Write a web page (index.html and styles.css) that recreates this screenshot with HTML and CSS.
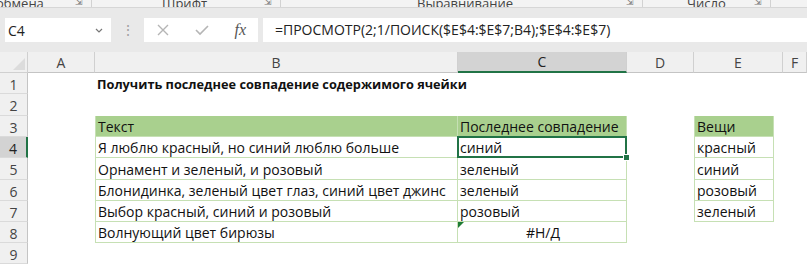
FILE: index.html
```html
<!DOCTYPE html>
<html lang="ru">
<head>
    <meta charset="UTF-8">
    <meta name="viewport" content="width=device-width, initial-scale=1.0">
    <title>Последнее совпадение</title>
    <link rel="stylesheet" href="styles.css">
</head>
<body>
    <div class="ribbon">
        <div class="group g-clip"><span>Буфер обмена</span><i class="launch">⇲</i></div>
        <div class="group g-font"><span>Шрифт</span><i class="launch">⇲</i></div>
        <div class="group g-align"><span>Выравнивание</span><i class="launch">⇲</i></div>
        <div class="group g-num"><span>Число</span><i class="launch">⇲</i></div>
    </div>

    <div class="formula-bar">
        <div class="name-box">
            <span>C4</span>
            <svg width="8" height="5" viewBox="0 0 8 5"><path d="M1 1 L4 4 L7 1" fill="none" stroke="#777" stroke-width="1.2"/></svg>
        </div>
        <div class="grip">⋮</div>
        <div class="fx-buttons">
            <svg width="14" height="14" viewBox="0 0 14 14"><path d="M2 2 L12 12 M12 2 L2 12" stroke="#b5b5b5" stroke-width="1.4"/></svg>
            <svg width="16" height="14" viewBox="0 0 16 14"><path d="M2 7 L6 11 L14 3" fill="none" stroke="#b5b5b5" stroke-width="1.6"/></svg>
            <span class="fx">fx</span>
        </div>
        <div class="formula">=ПРОСМОТР(2;1/ПОИСК($E$4:$E$7;B4);$E$4:$E$7)</div>
    </div>

    <div class="sheet">
        <div class="corner"></div>
        <div class="col-hdr">A</div>
        <div class="col-hdr">B</div>
        <div class="col-hdr active">C</div>
        <div class="col-hdr">D</div>
        <div class="col-hdr">E</div>
        <div class="col-hdr">F</div>

        <div class="row-hdr">1</div>
        <div class="cell"></div>
        <div class="cell title">Получить последнее совпадение содержимого ячейки</div>
        <div class="cell"></div><div class="cell"></div><div class="cell"></div><div class="cell"></div>

        <div class="row-hdr">2</div>
        <div class="cell"></div><div class="cell"></div><div class="cell"></div><div class="cell"></div><div class="cell"></div><div class="cell"></div>

        <div class="row-hdr">3</div>
        <div class="cell"></div>
        <div class="cell tb first head">Текст</div>
        <div class="cell tb head">Последнее совпадение</div>
        <div class="cell"></div>
        <div class="cell"><div class="tb first head things">Вещи</div></div>
        <div class="cell"></div>

        <div class="row-hdr active">4</div>
        <div class="cell"></div>
        <div class="cell tb first">Я люблю красный, но синий люблю больше</div>
        <div class="cell tb selected">синий</div>
        <div class="cell"></div>
        <div class="cell"><div class="tb first things">красный</div></div>
        <div class="cell"></div>

        <div class="row-hdr">5</div>
        <div class="cell"></div>
        <div class="cell tb first">Орнамент и зеленый, и розовый</div>
        <div class="cell tb">зеленый</div>
        <div class="cell"></div>
        <div class="cell"><div class="tb first things">синий</div></div>
        <div class="cell"></div>

        <div class="row-hdr">6</div>
        <div class="cell"></div>
        <div class="cell tb first">Блонидинка, зеленый цвет глаз, синий цвет джинс</div>
        <div class="cell tb">зеленый</div>
        <div class="cell"></div>
        <div class="cell"><div class="tb first things">розовый</div></div>
        <div class="cell"></div>

        <div class="row-hdr">7</div>
        <div class="cell"></div>
        <div class="cell tb first">Выбор красный, синий и розовый</div>
        <div class="cell tb">розовый</div>
        <div class="cell"></div>
        <div class="cell"><div class="tb first things">зеленый</div></div>
        <div class="cell"></div>

        <div class="row-hdr">8</div>
        <div class="cell"></div>
        <div class="cell tb first">Волнующий цвет бирюзы</div>
        <div class="cell tb error">#Н/Д</div>
        <div class="cell"></div><div class="cell"></div><div class="cell"></div>

        <div class="row-hdr">9</div>
        <div class="cell"></div><div class="cell"></div><div class="cell"></div><div class="cell"></div><div class="cell"></div><div class="cell"></div>
    </div>
</body>
</html>
```

FILE: styles.css
```css
body {
    margin: 0;
    width: 807px;
    height: 265px;
    overflow: hidden;
    background-color: #ffffff;
    font-family: "Open Sans", "Noto Sans", sans-serif;
    color: #000;
}

/* ribbon strip, only the bottom of the group labels shows */
.ribbon {
    height: 7px;
    background-color: #f3f3f3;
    border-bottom: 1px solid #d6d6d6;
    display: flex;
    overflow: hidden;
    font-size: 13px;
    color: #444;
}

.group {
    display: flex;
    align-items: flex-end;
    height: 7px;
    line-height: 16px;
    border-right: 1px solid #d2d2d2;
    box-sizing: border-box;
}

.group span {
    margin-bottom: -4px;
}

.launch {
    font-style: normal;
    font-size: 9px;
    margin-left: auto;
    margin-right: 8px;
    margin-bottom: -3px;
    color: #777;
}

.g-clip { width: 92px; padding-left: 0; }
.g-clip span { margin-left: -4px; }
.g-font { width: 189px; }
.g-font span { margin-left: 70px; }
.g-align { width: 362px; }
.g-align span { margin-left: 136px; }
.g-num { width: 128px; }
.g-num span { margin-left: 44px; }

.formula-bar {
    height: 44px;
    background-color: #e9e9e9;
    display: flex;
    align-items: flex-start;
    padding-top: 10px;
    box-sizing: border-box;
    font-size: 14px;
}

.name-box {
    margin-left: 5px;
    width: 106px;
    height: 24px;
    background-color: #fff;
    display: flex;
    align-items: center;
    justify-content: space-between;
    padding: 0 8px 0 3px;
    box-sizing: border-box;
    color: #222;
}

.grip {
    width: 33px;
    text-align: center;
    line-height: 24px;
    color: #a0a0a0;
    font-size: 14px;
}

.fx-buttons {
    width: 114px;
    height: 24px;
    background-color: #fff;
    display: flex;
    align-items: center;
    justify-content: space-between;
    padding: 0 12px 0 12px;
    box-sizing: border-box;
}

.fx {
    font-family: "Liberation Serif", serif;
    font-style: italic;
    font-size: 16px;
    color: #555;
}

.formula {
    margin-left: 5px;
    flex: 1;
    height: 24px;
    background-color: #fff;
    line-height: 24px;
    padding-left: 12px;
    color: #222;
    white-space: nowrap;
}

/* worksheet grid */
.sheet {
    display: grid;
    grid-template-columns: 28px 67px 363px 169px 67px 89px 1fr;
    grid-template-rows: 21px 21px 22px 21px 21px 22px 21px 21px 21px 21px;
    font-size: 14px;
}

.corner,
.col-hdr,
.row-hdr {
    background-color: #f0f0f0;
    color: #444;
    box-sizing: border-box;
}

.corner {
    border-right: 1px solid #d0d0d0;
    border-bottom: 1px solid #d0d0d0;
    position: relative;
}

.corner::after {
    content: "";
    position: absolute;
    right: 2px;
    bottom: 2px;
    border-left: 12px solid transparent;
    border-bottom: 12px solid #dcdcdc;
}

.col-hdr {
    display: flex;
    align-items: center;
    justify-content: center;
    border-right: 1px solid #d0d0d0;
    border-bottom: 1px solid #c4c4c4;
    font-size: 14px;
}

.col-hdr.active {
    background-color: #d3d3d3;
    border-bottom: 2px solid #217346;
    color: #222;
}

.row-hdr {
    display: flex;
    align-items: center;
    justify-content: center;
    border-right: 1px solid #c4c4c4;
    border-bottom: 1px solid #dadada;
    padding-top: 2px;
}

.row-hdr.active {
    background-color: #d3d3d3;
    border-right: 2px solid #217346;
    color: #222;
}

.cell {
    display: flex;
    align-items: center;
    padding-left: 2px;
    padding-top: 1px;
    box-sizing: border-box;
    white-space: nowrap;
    position: relative;
    color: #111;
}

.title {
    font-weight: bold;
    overflow: visible;
    font-size: 12.75px;
}

.tb {
    border-right: 1px solid #c6e0b4;
    border-bottom: 1px solid #c6e0b4;
}

.tb.first {
    border-left: 1px solid #c6e0b4;
}

.head {
    background-color: #a9d08e;
}

.cell:has(.things) {
    padding: 0;
}

.things {
    width: 80px;
    height: 100%;
    display: flex;
    align-items: center;
    padding-left: 2px;
    padding-top: 1px;
    box-sizing: border-box;
}

.selected::after {
    content: "";
    position: absolute;
    left: -1px;
    top: -1px;
    right: -1px;
    bottom: -1px;
    border: 2px solid #217346;
}

.selected::before {
    content: "";
    position: absolute;
    right: -4px;
    bottom: -4px;
    width: 5px;
    height: 5px;
    background-color: #217346;
    border: 1px solid #fff;
    z-index: 2;
}

.error {
    justify-content: center;
}

.error::before {
    content: "";
    position: absolute;
    left: 0;
    top: 0;
    border-top: 6px solid #1e7b34;
    border-right: 6px solid transparent;
}
```
